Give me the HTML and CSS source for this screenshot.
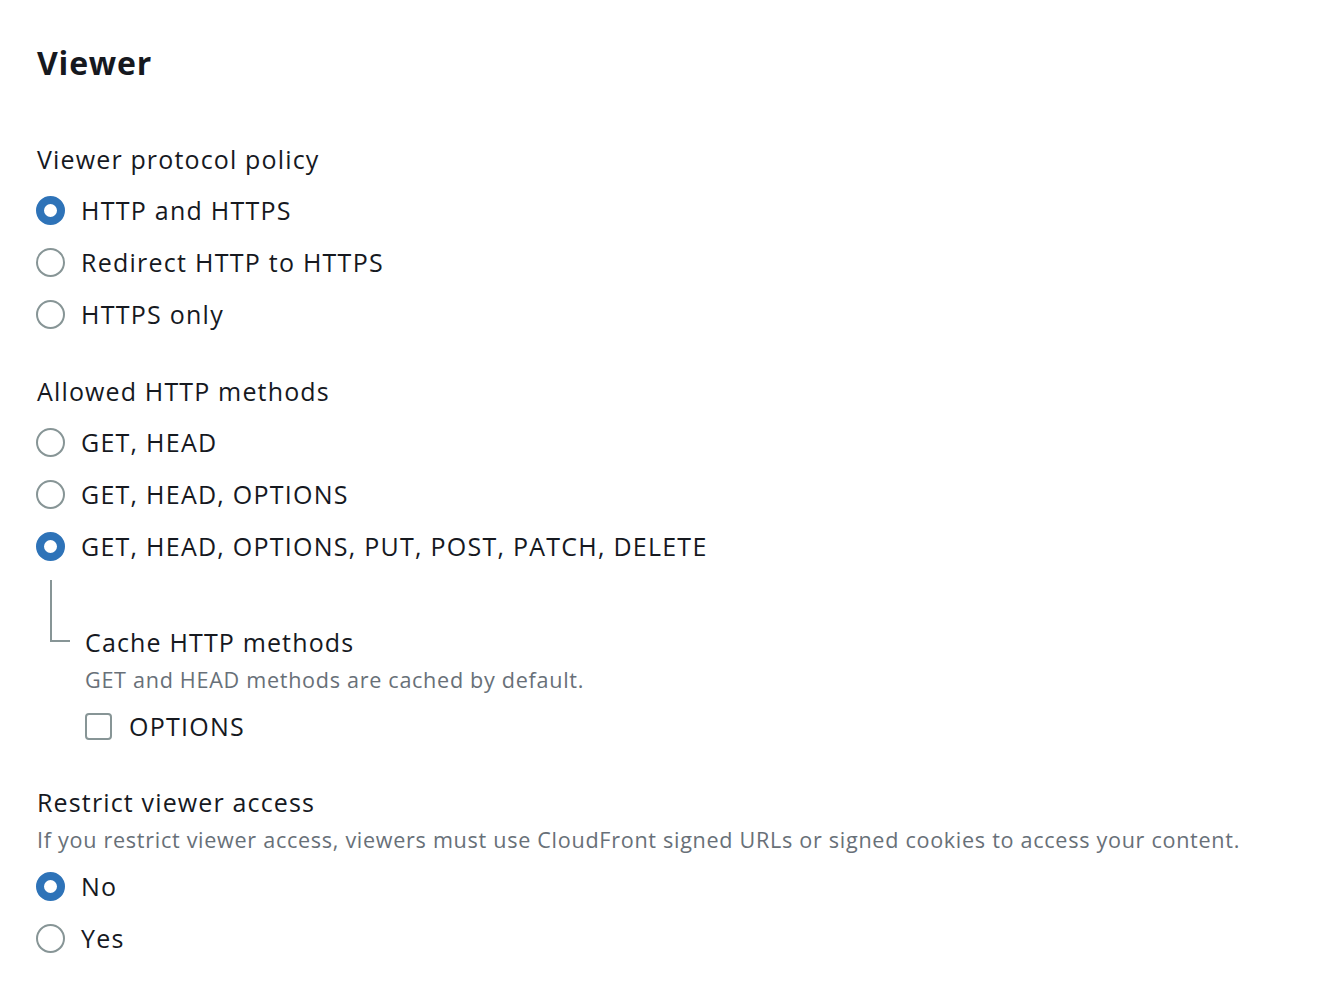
FILE: index.html
```html
<!DOCTYPE html>
<html>
<head>
<meta charset="utf-8">
<link rel="stylesheet" href="styles.css">
</head>
<body>
<div class="page">
  <h2 class="heading">Viewer</h2>

  <div class="field first">
    <div class="label">Viewer protocol policy</div>
    <div class="radio-group">
      <div class="radio-row"><span class="radio checked"></span><span class="opt">HTTP and HTTPS</span></div>
      <div class="radio-row"><span class="radio"></span><span class="opt">Redirect HTTP to HTTPS</span></div>
      <div class="radio-row"><span class="radio"></span><span class="opt">HTTPS only</span></div>
    </div>
  </div>

  <div class="field">
    <div class="label">Allowed HTTP methods</div>
    <div class="radio-group">
      <div class="radio-row"><span class="radio"></span><span class="opt">GET, HEAD</span></div>
      <div class="radio-row"><span class="radio"></span><span class="opt">GET, HEAD, OPTIONS</span></div>
      <div class="radio-row"><span class="radio checked"></span><span class="opt">GET, HEAD, OPTIONS, PUT, POST, PATCH, DELETE</span></div>
    </div>
    <div class="nested">
      <div class="tree"><div class="tree-line"></div></div>
      <div class="nested-body">
        <div class="label">Cache HTTP methods</div>
        <div class="desc">GET and HEAD methods are cached by default.</div>
        <div class="check-row"><span class="checkbox"></span><span class="opt">OPTIONS</span></div>
      </div>
    </div>
  </div>

  <div class="field restrict">
    <div class="label">Restrict viewer access</div>
    <div class="desc">If you restrict viewer access, viewers must use CloudFront signed URLs or signed cookies to access your content.</div>
    <div class="radio-group">
      <div class="radio-row"><span class="radio checked"></span><span class="opt">No</span></div>
      <div class="radio-row"><span class="radio"></span><span class="opt">Yes</span></div>
    </div>
  </div>
</div>
</body>
</html>
```
FILE: styles.css
```css
* { box-sizing: border-box; }
html, body { margin: 0; padding: 0; background: #ffffff; }
body {
  font-family: "Open Sans", "Noto Sans", sans-serif;
  color: #16191f;
}
.page {
  padding: 43px 0 0 37px;
}
.heading {
  margin: 0;
  font-size: 32px;
  font-weight: 700;
  line-height: 40px;
  letter-spacing: 0.8px;
}
.field.first { margin-top: 58px; }
.field { margin-top: 33px; }
.field.restrict { margin-top: 38px; }
.label {
  font-size: 25px;
  line-height: 36px;
  height: 36px;
  margin-bottom: 7px;
  letter-spacing: 1.15px;
  white-space: nowrap;
}
.radio-group { display: flex; flex-direction: column; }
.radio-row {
  display: flex;
  align-items: center;
  height: 52px;
}
.radio {
  width: 29px;
  height: 29px;
  border-radius: 50%;
  border: 2px solid #879596;
  background: #fff;
  flex: none;
  margin-left: -1px;
}
.radio.checked {
  border: 8.5px solid #2e73b8;
}
.opt {
  font-size: 25px;
  line-height: 36px;
  margin-left: 16px;
  letter-spacing: 1.25px;
  white-space: nowrap;
}
.nested { display: flex; }
.tree { width: 48px; flex: none; }
.tree-line {
  margin-top: 8px;
  margin-left: 13px;
  width: 20px;
  height: 62px;
  border-left: 2px solid #879596;
  border-bottom: 2px solid #879596;
}
.nested-body { padding-top: 52px; }
.nested-body .label { margin-bottom: 4px; }
.desc {
  font-size: 21.6px;
  line-height: 32px;
  color: #687078;
  letter-spacing: 0.7px;
  white-space: nowrap;
}
.check-row {
  display: flex;
  align-items: center;
  height: 40px;
  margin-top: 10px;
}
.checkbox {
  width: 27px;
  height: 27px;
  border: 2px solid #879596;
  border-radius: 4px;
  flex: none;
}
.check-row .opt { margin-left: 17px; }
.restrict .label { margin-bottom: 4px; }
.restrict .desc { margin-bottom: 4px; }
```
